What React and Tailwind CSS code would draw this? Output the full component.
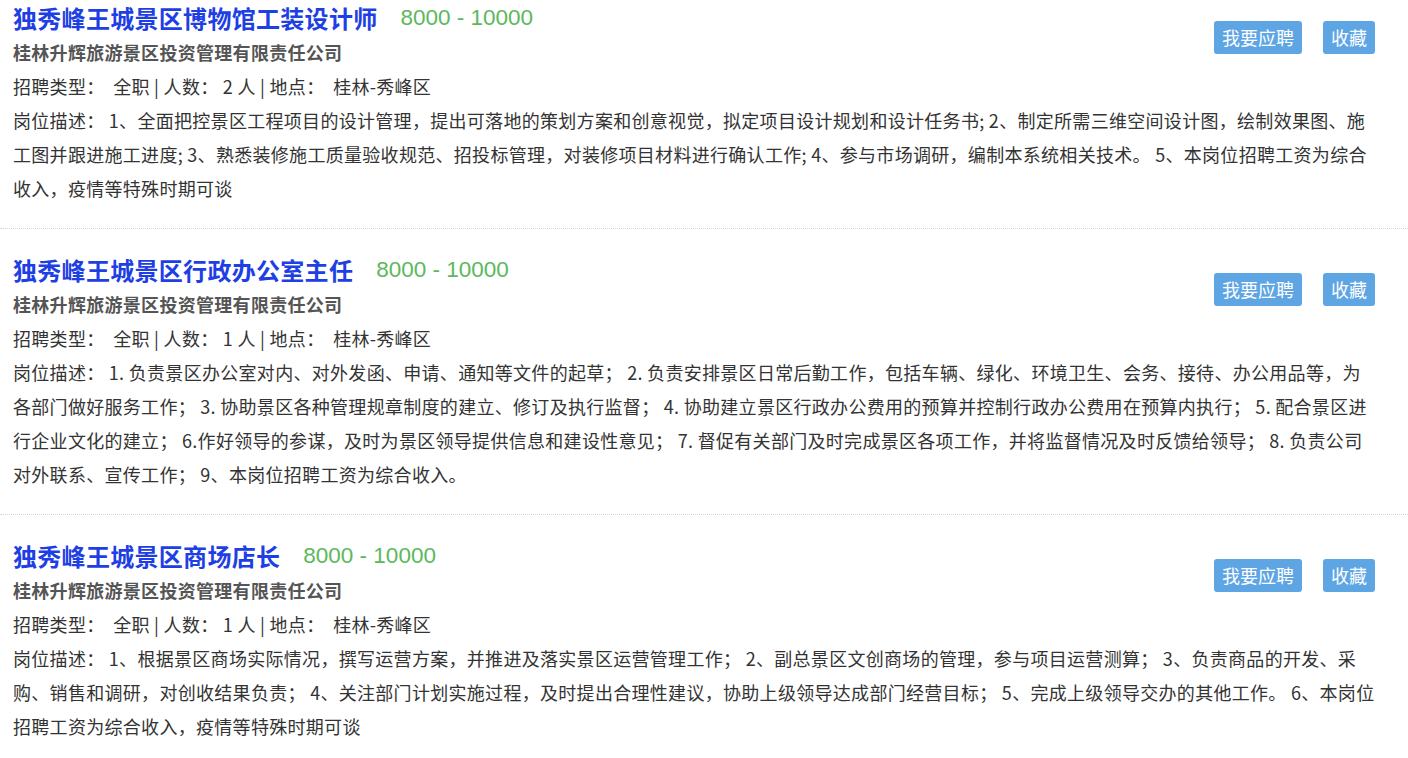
import React from 'react';

const jobs = [
  {
    title: '独秀峰王城景区博物馆工装设计师',
    salary: '8000 - 10000',
    company: '桂林升辉旅游景区投资管理有限责任公司',
    count: '2',
    place: '桂林-秀峰区',
    desc: [
      '岗位描述： 1、全面把控景区工程项目的设计管理，提出可落地的策划方案和创意视觉，拟定项目设计规划和设计任务书; 2、制定所需三维空间设计图，绘制效果图、施',
      '工图并跟进施工进度; 3、熟悉装修施工质量验收规范、招投标管理，对装修项目材料进行确认工作; 4、参与市场调研，编制本系统相关技术。 5、本岗位招聘工资为综合',
      '收入，疫情等特殊时期可谈',
    ],
  },
  {
    title: '独秀峰王城景区行政办公室主任',
    salary: '8000 - 10000',
    company: '桂林升辉旅游景区投资管理有限责任公司',
    count: '1',
    place: '桂林-秀峰区',
    desc: [
      '岗位描述： 1. 负责景区办公室对内、对外发函、申请、通知等文件的起草； 2. 负责安排景区日常后勤工作，包括车辆、绿化、环境卫生、会务、接待、办公用品等，为',
      '各部门做好服务工作； 3. 协助景区各种管理规章制度的建立、修订及执行监督； 4. 协助建立景区行政办公费用的预算并控制行政办公费用在预算内执行； 5. 配合景区进',
      '行企业文化的建立； 6.作好领导的参谋，及时为景区领导提供信息和建设性意见； 7. 督促有关部门及时完成景区各项工作，并将监督情况及时反馈给领导； 8. 负责公司',
      '对外联系、宣传工作； 9、本岗位招聘工资为综合收入。',
    ],
  },
  {
    title: '独秀峰王城景区商场店长',
    salary: '8000 - 10000',
    company: '桂林升辉旅游景区投资管理有限责任公司',
    count: '1',
    place: '桂林-秀峰区',
    desc: [
      '岗位描述： 1、根据景区商场实际情况，撰写运营方案，并推进及落实景区运营管理工作； 2、副总景区文创商场的管理，参与项目运营测算； 3、负责商品的开发、采',
      '购、销售和调研，对创收结果负责； 4、关注部门计划实施过程，及时提出合理性建议，协助上级领导达成部门经营目标； 5、完成上级领导交办的其他工作。 6、本岗位',
      '招聘工资为综合收入，疫情等特殊时期可谈',
    ],
  },
];

function JobItem({ job }) {
  return (
    <div className="pt-6 pb-[23px] pl-[13px] pr-[33px] border-b border-dotted border-[#d6d6d6]">
      <div className="flex justify-between">
        <div>
          <div className="flex items-center h-[34px]">
            <span className="text-[24px] font-bold text-[#1e3fe4] tracking-[0.3px]">{job.title}</span>
            <span
              className="ml-[23px] text-[22.5px] text-[#5cb85c]"
              style={{ fontFamily: '"Liberation Sans", Arial, sans-serif' }}
            >
              {job.salary}
            </span>
          </div>
          <div className="h-[34px] leading-[34px] text-[18px] font-bold text-[#555] tracking-[0.3px]">{job.company}</div>
          <div className="h-[34px] leading-[34px] text-[18px] text-[#333] tracking-[0.3px] whitespace-pre">
            {`招聘类型：  全职 | 人数： 2 人 | 地点：  ${job.place}`.replace('2', job.count)}
          </div>
        </div>
        <div className="flex gap-[21px] pt-5 items-start">
          <button className="h-[33px] px-2 rounded-[3px] bg-[#5ea5e4] text-white text-[18px]">我要应聘</button>
          <button className="h-[33px] px-2 rounded-[3px] bg-[#5ea5e4] text-white text-[18px]">收藏</button>
        </div>
      </div>
      <div className="text-[18px] leading-[34px] text-[#333] tracking-[0.3px]">
        {job.desc.map((line) => (
          <div key={line} className="whitespace-nowrap">
            {line}
          </div>
        ))}
      </div>
    </div>
  );
}

export default function App() {
  return (
    <div
      className="w-[1408px] h-[758px] overflow-hidden bg-white"
      style={{ fontFamily: '"Microsoft YaHei", "Noto Sans CJK SC", sans-serif' }}
    >
      <div className="-mt-[23px]">
        {jobs.map((job) => (
          <JobItem key={job.title} job={job} />
        ))}
      </div>
    </div>
  );
}
